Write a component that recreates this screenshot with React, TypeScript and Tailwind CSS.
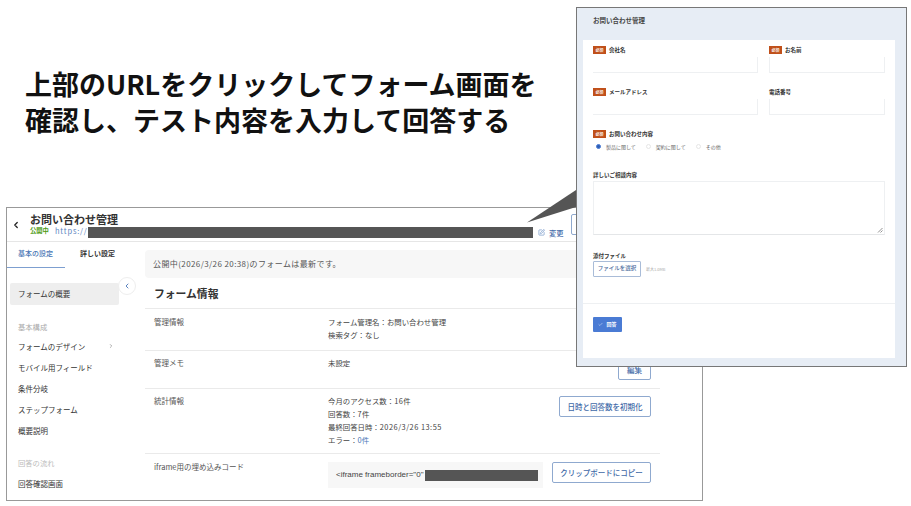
import { ReactNode } from 'react';
import { ChevronLeft, ChevronRight, Check, SquarePen } from 'lucide-react';

const font = { fontFamily: '"Noto Sans CJK JP", "Noto Sans", sans-serif' };

const SideItem = ({ label, className = '' }: { label: string; className?: string }) => (
  <p className={`h-[21px] pl-[8px] text-[7.5px] leading-[21px] text-[#333] ${className}`}>{label}</p>
);

const SideHead = ({ label, className = '' }: { label: string; className?: string }) => (
  <p className={`pl-[8px] text-[7.3px] leading-[14px] text-[#aaa] ${className}`}>{label}</p>
);

const OutlineButton = ({ children, className = '' }: { children: ReactNode; className?: string }) => (
  <div className={`flex h-[21px] items-center justify-center rounded-[2px] border border-[#8fa9cf] bg-white text-[7.5px] font-medium text-[#3f6aa8] ${className}`}>
    {children}
  </div>
);

interface InfoRowProps {
  label: string;
  height: string;
  pad: string;
  children: ReactNode;
  action?: ReactNode;
}

const InfoRow = ({ label, height, pad, children, action }: InfoRowProps) => (
  <div className={`flex border-b border-[#eaeaea] ${height}`}>
    <p className={`w-[183px] shrink-0 pl-[9px] text-[7.5px] leading-[13px] text-[#555] ${pad}`}>{label}</p>
    <div className={`min-w-0 flex-1 text-[7.4px] leading-[13px] text-[#444] ${pad}`}>{children}</div>
    {action}
  </div>
);

const Badge = () => (
  <span className="flex h-[8px] w-[13px] items-center justify-center bg-[#c0501a] text-[4px] font-bold text-white">必須</span>
);

const FieldLabel = ({ label, required }: { label: string; required?: boolean }) => (
  <div className="flex h-[8px] items-center gap-[3px]">
    {required ? <Badge /> : null}
    <span className="text-[5.5px] font-bold text-[#333]">{label}</span>
  </div>
);

const Input = ({ className = '' }: { className?: string }) => (
  <div className={`mt-[3px] h-[16px] border-b border-r border-[#eef0f2] ${className}`} />
);

const Radio = ({ label, on }: { label: string; on?: boolean }) => (
  <div className="flex items-center gap-[5px]">
    <span className={`h-[5px] w-[5px] rounded-full ${on ? 'border-[1.5px] border-[#4a7bd4] bg-[#2f5fb5]' : 'border border-[#e6e6e6]'}`} />
    <span className="text-[5px] text-[#666]">{label}</span>
  </div>
);

const FormPreview = () => (
  <div className="absolute left-[576px] top-[7px] flex h-[360px] w-[331px] flex-col border border-[#777] bg-[#e7edf5] pb-[8px] pl-[6px] pr-[11px]">
    <p className="h-[32px] pl-[10px] pt-[6px] text-[6.5px] font-bold leading-[12px] text-[#444]">お問い合わせ管理</p>
    <div className="flex flex-1 flex-col bg-white pt-[6px]">
      <div className="grid grid-cols-[165px_116px] gap-x-[11px] gap-y-[15px] px-[10px]">
        <div>
          <FieldLabel label="会社名" required />
          <Input />
        </div>
        <div>
          <FieldLabel label="お名前" required />
          <Input className="border-l" />
        </div>
        <div>
          <FieldLabel label="メールアドレス" required />
          <Input />
        </div>
        <div>
          <FieldLabel label="電話番号" />
          <Input className="border-l" />
        </div>
      </div>
      <div className="mt-[15px] px-[10px]">
        <FieldLabel label="お問い合わせ内容" required />
        <div className="mt-[5px] flex gap-[10px] pl-[3px]">
          <Radio label="製品に関して" on />
          <Radio label="契約に関して" />
          <Radio label="その他" />
        </div>
      </div>
      <div className="mt-[21px] px-[10px]">
        <FieldLabel label="詳しいご相談内容" />
        <div className="relative mt-[1px] h-[54px] w-[292px] border border-t-[#eef0f2] border-r-[#eef0f2] border-b-[#e4e6e8] border-l-[#eef0f2]">
          <svg className="absolute bottom-[1px] right-[1px]" width="6" height="6" viewBox="0 0 6 6" fill="none" stroke="#666" strokeWidth="0.7">
            <path d="M1 5.5 5.5 1M3.5 5.5 5.5 3.5" />
          </svg>
        </div>
      </div>
      <div className="mt-[18px] px-[10px]">
        <FieldLabel label="添付ファイル" />
        <div className="flex items-center gap-[5px]">
          <div className="flex h-[16px] w-[48px] items-center justify-center rounded-[1px] border border-[#a9bcd8] text-[5.5px] font-medium text-[#4a6a9c]">ファイルを選択</div>
          <span className="text-[4px] text-[#aaa]">最大1.0MB</span>
        </div>
      </div>
      <div className="mt-[26px] border-t border-[#eef0f2] px-[10px] pt-[13px]">
        <div className="flex h-[15px] w-[29px] items-center justify-center gap-[3px] rounded-[1px] bg-[#4a7bd4] text-[5px] font-bold text-white">
          <Check size={5} strokeWidth={2} />
          <span>回答</span>
        </div>
      </div>
    </div>
  </div>
);

const AdminWindow = () => (
  <div className="absolute left-[6px] top-[207px] flex h-[294px] w-[697px] flex-col overflow-hidden border border-[#999] bg-white">
    <header className="flex h-[34px] shrink-0 items-center border-b border-[#e6e6e6]">
      <ChevronLeft size={10} strokeWidth={3} className="ml-[4px] text-[#222]" />
      <div className="ml-[9px] pt-[1px]">
        <p className="text-[11px] font-bold leading-[15px] text-[#333]">お問い合わせ管理</p>
        <div className="flex h-[12px] items-center text-[6.3px] leading-[12px]">
          <span className="mb-[3px] w-[19px] font-bold text-[#4d9a12]">公開中</span>
          <span className="mb-[3px] ml-[6px] w-[33px] text-[7.5px] tracking-[0.8px] text-[#5b84c0]">https://</span>
          <span className="h-[11px] w-[445px] bg-[#555]" />
          <SquarePen size={7} className="ml-[5px] text-[#5b84c0]" />
          <span className="ml-[4px] text-[7.3px] font-medium text-[#3f6aa8]">変更</span>
        </div>
      </div>
      <div className="ml-[7px] h-[21px] w-[40px] rounded-[2px] border border-[#8fa9cf]" />
    </header>
    <div className="flex min-h-0 flex-1" style={font}>
      <aside className="relative w-[138px] shrink-0 pl-[3px]">
        <div className="-ml-[3px] flex h-[26px] w-[120px] whitespace-nowrap text-[7px] font-medium">
          <p className="w-[58px] border-b border-[#7d9fd0] pl-[11px] pt-[6px] text-[#4a76b5]">基本の設定</p>
          <p className="pl-[15px] pt-[6px] font-bold text-[#333]">詳しい設定</p>
        </div>
        <div className="mt-[15px] h-[22px] w-[109px] rounded-[2px] bg-[#eeeeee] pl-[8px] text-[7.5px] leading-[21px] text-[#333]">フォームの概要</div>
        <div className="absolute left-[111px] top-[35px] flex h-[18px] w-[18px] items-center justify-center rounded-full border border-[#eee] bg-white">
          <ChevronLeft size={8} strokeWidth={3} className="text-[#5b84c0]" />
        </div>
        <SideHead label="基本構成" className="mt-[15px]" />
        <div className="relative mt-[2px]">
          <SideItem label="フォームのデザイン" />
          <ChevronRight size={6} strokeWidth={2} className="absolute left-[98px] top-[7px] text-[#666]" />
        </div>
        <SideItem label="モバイル用フィールド" />
        <SideItem label="条件分岐" />
        <SideItem label="ステップフォーム" />
        <SideItem label="概要説明" />
        <SideHead label="回答の流れ" className="mt-[15px] text-[#bbb]" />
        <SideItem label="回答確認画面" className="mt-[3px]" />
      </aside>
      <main className="min-w-0 flex-1 pr-[42px] pt-[8px]">
        <div className="mr-[-42px] h-[28px] rounded-l-[4px] bg-[#f7f7f7] pl-[8px] text-[8px] leading-[28px] tracking-[0.4px] text-[#555]">
          公開中(2026/3/26 20:38)のフォームは最新です。
        </div>
        <h2 className="h-[31px] border-b border-[#eaeaea] pl-[9px] text-[10.8px] font-bold leading-[30px] text-[#333]">フォーム情報</h2>
        <InfoRow label="管理情報" height="h-[42px]" pad="pt-[6px]">
          <p>フォーム管理名：お問い合わせ管理</p>
          <p>検索タグ：なし</p>
        </InfoRow>
        <InfoRow
          label="管理メモ"
          height="h-[38px]"
          pad="pt-[5px]"
          action={<OutlineButton className="mr-[9px] mt-[8px] w-[33px]">編集</OutlineButton>}
        >
          <p>未設定</p>
        </InfoRow>
        <InfoRow
          label="統計情報"
          height="h-[65px]"
          pad="pt-[5px]"
          action={<OutlineButton className="mr-[9px] mt-[7px] w-[92px]">日時と回答数を初期化</OutlineButton>}
        >
          <p>今月のアクセス数：<span className="tracking-[0.4px]">16</span>件</p>
          <p>回答数：<span className="tracking-[0.4px]">7</span>件</p>
          <p>最終回答日時：<span className="tracking-[0.5px]">2026/3/26 13:55</span></p>
          <p>エラー：<span className="text-[#4a76b5]">0件</span></p>
        </InfoRow>
        <div className="flex">
          <p className="w-[183px] shrink-0 pl-[9px] pt-[6px] text-[7.5px] leading-[13px] text-[#555]">iframe用の埋め込みコード</p>
          <div className="mt-[8px] flex h-[26px] w-[215px] items-center bg-[#f7f7f7] pl-[8px] font-['Liberation_Sans',sans-serif] text-[8px] text-[#444]">
            <span className="w-[89px] shrink-0 whitespace-nowrap">&lt;iframe frameborder="0" s</span>
            <span className="h-[11px] w-[113px] bg-[#555]" />
          </div>
          <OutlineButton className="ml-[9px] mt-[8px] w-[99px]">クリップボードにコピー</OutlineButton>
        </div>
      </main>
    </div>
  </div>
);

export default function App() {
  return (
    <div className="relative h-[506px] w-[911px] overflow-hidden bg-white" style={font}>
      <h1 className="absolute left-[25px] top-[66px] whitespace-nowrap text-[27px] font-bold leading-[36px] text-[#111]">
        上部のURLをクリックしてフォーム画面を
        <br />
        確認し、テスト内容を入力して回答する
      </h1>
      <AdminWindow />
      <svg className="absolute left-[527px] top-[185px]" width="50" height="38" viewBox="0 0 50 38">
        <polygon points="0,37.5 49,5 49,22" fill="#555" />
      </svg>
      <FormPreview />
    </div>
  );
}
